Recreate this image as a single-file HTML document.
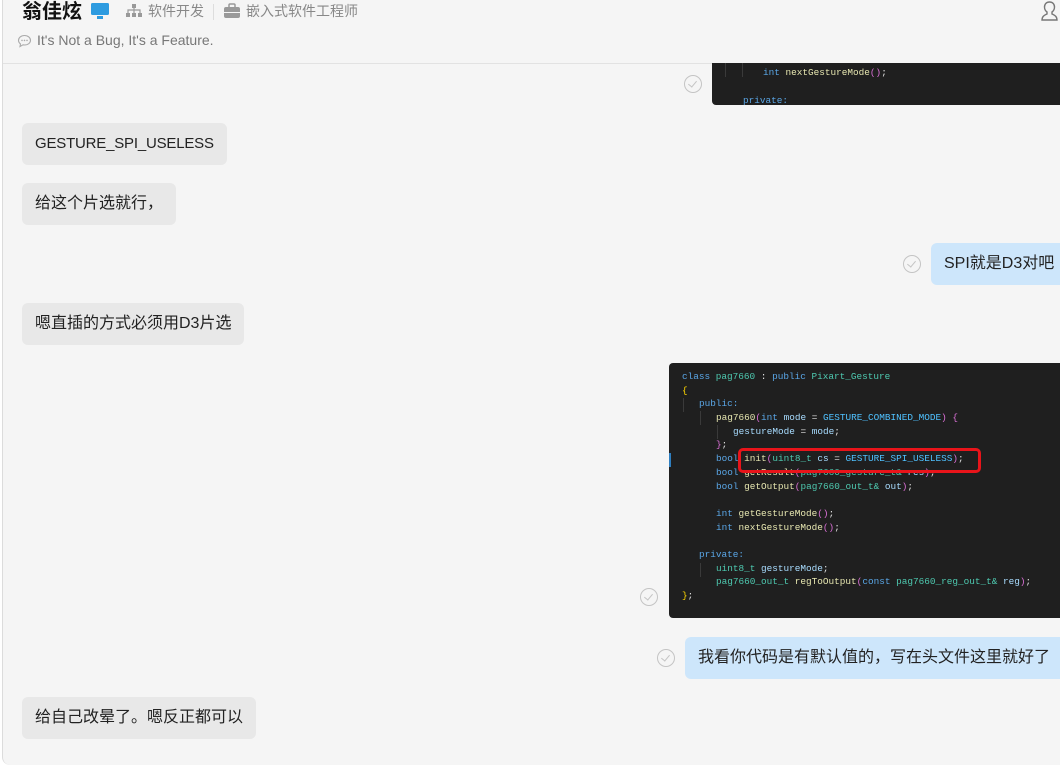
<!DOCTYPE html>
<html><head><meta charset="utf-8"><style>
html,body{margin:0;padding:0;background:#fff;}
body{width:1060px;height:767px;position:relative;overflow:hidden;font-family:"Liberation Sans","Noto Sans CJK SC",sans-serif;}
.win{position:absolute;left:2px;top:-10px;width:1070px;height:775px;background:#f5f5f5;border-left:1px solid #dcdcdc;border-radius:8px;overflow:hidden;}
.hdrline{position:absolute;left:3px;top:63px;width:1060px;height:1px;background:#e2e2e2;}
.abs{position:absolute;white-space:nowrap;}
.b{position:absolute;height:42px;line-height:42px;font-size:16px;color:#222;padding:0 13px;border-radius:6px;white-space:nowrap;}
.l{background:#e8e8e8;}
.r{background:#cde6fb;}
.chk{position:absolute;width:16px;height:16px;border:1.5px solid #c4c4c4;border-radius:50%;}
.chk:after{content:"";position:absolute;left:5px;top:3px;width:4px;height:7px;border:solid #c4c4c4;border-width:0 1.5px 1.5px 0;transform:rotate(40deg);}
.code{position:absolute;background:#1f1f1f;border-radius:4px;font-family:"Liberation Mono",monospace;font-size:9.4px;color:#e0e0e0;overflow:hidden;}
.code div{height:13.7px;line-height:13.7px;white-space:pre;}
.k{color:#5aa6e6}.t{color:#4ec9b0}.f{color:#e6e6b0}.p{color:#da70d6}.y{color:#ffd700}.m{color:#4fc1ff}.v{color:#a8dcff}
.g{position:absolute;top:0;bottom:0;width:1px;background:#3a3a3a;}
</style></head><body>
<div class="win"></div>
<div class="hdrline"></div>
<div class="abs" style="left:22px;top:0px;font-size:20px;font-weight:bold;color:#111;line-height:24px;">翁佳炫</div>
<svg class="abs" style="left:90px;top:2px" width="20" height="18" viewBox="0 0 20 18"><rect x="1" y="1" width="18" height="12" rx="1.5" fill="#2d9be0"/><rect x="7" y="14" width="6" height="3" fill="#2d9be0"/></svg>
<svg class="abs" style="left:125px;top:3px" width="18" height="16" viewBox="0 0 18 16" fill="#999"><rect x="7" y="1" width="4" height="4"/><rect x="1" y="10" width="4" height="4"/><rect x="7" y="10" width="4" height="4"/><rect x="13" y="10" width="4" height="4"/><path d="M3 10V7h12v3M9 5v5" stroke="#999" fill="none" stroke-width="1.2"/></svg>
<div class="abs" style="left:148px;top:3px;font-size:14px;color:#888;line-height:17px;">软件开发</div>
<div class="abs" style="left:213px;top:4px;width:1px;height:16px;background:#ddd;"></div>
<svg class="abs" style="left:223px;top:3px" width="18" height="16" viewBox="0 0 18 16"><rect x="1" y="4" width="16" height="11" rx="2" fill="#999"/><rect x="6" y="1" width="6" height="4" rx="1" fill="none" stroke="#999" stroke-width="1.5"/><rect x="1" y="9" width="16" height="1" fill="#f5f5f5"/></svg>
<div class="abs" style="left:246px;top:3px;font-size:14px;color:#888;line-height:17px;">嵌入式软件工程师</div>
<svg class="abs" style="left:17px;top:34px" width="15" height="14" viewBox="0 0 15 14"><path d="M7.5 1.5C4 1.5 1.5 3.6 1.5 6.3c0 1.5.8 2.8 2 3.6L3 12.5l3-1.7c.5.1 1 .2 1.5.2 3.5 0 6-2.1 6-4.7S11 1.5 7.5 1.5z" fill="none" stroke="#aaa" stroke-width="1.1"/><circle cx="5" cy="6.4" r=".8" fill="#aaa"/><circle cx="7.5" cy="6.4" r=".8" fill="#aaa"/><circle cx="10" cy="6.4" r=".8" fill="#aaa"/></svg>
<div class="abs" style="left:37px;top:32px;font-size:14px;color:#777;line-height:17px;">It's Not a Bug, It's a Feature.</div>
<svg class="abs" style="left:1040px;top:0px" width="20" height="22" viewBox="0 0 20 22"><path d="M2 20c0-4 3-5 5-6v-2c-1.5-1-2.5-2.5-2.5-5C4.5 4 6.5 2 9.5 2s5 2 5 5c0 2.5-1 4-2.5 5v2c2 1 5 2 5 6z" fill="none" stroke="#777" stroke-width="1.4"/></svg>

<div class="code" style="left:712px;top:63px;width:360px;height:42px;border-radius:0 0 4px 4px;">
 <div class="g" style="left:13px"></div><div class="g" style="left:30px"></div>
 <div style="padding-left:51px;margin-top:3px"><span class="k">int</span> <span class="f">nextGestureMode</span><span class="p">()</span>;</div>
 <div></div>
 <div style="padding-left:31px;margin-top:1px" class="k">private:</div>
</div>
<div class="chk" style="left:684px;top:75px"></div>

<div class="b l" style="left:22px;top:123px;font-size:15px;letter-spacing:-0.2px">GESTURE_SPI_USELESS</div>
<div class="b l" style="left:22px;top:183px">给这个片选就行，</div>
<div class="chk" style="left:903px;top:255px"></div>
<div class="b r" style="left:931px;top:243px;padding-right:20px">SPI就是D3对吧</div>
<div class="b l" style="left:22px;top:303px">嗯直插的方式必须用D3片选</div>

<div class="code" style="left:669px;top:363px;width:400px;height:255px;padding-top:7px;box-sizing:border-box;">
 <div class="g" style="left:14px;top:35px;bottom:25px"></div>
 <div class="g" style="left:31px;top:48px;bottom:90px"></div>
 <div class="g" style="left:48px;top:62px;bottom:150px"></div>
 <div class="g" style="left:31px;top:200px;bottom:25px"></div>
 <div style="position:absolute;left:0;top:90px;width:2px;height:14px;background:#2f7fc0"></div>
 <div style="padding-left:13px"><span class="k">class</span> <span class="t">pag7660</span> : <span class="k">public</span> <span class="t">Pixart_Gesture</span></div>
 <div style="padding-left:13px"><span class="y">{</span></div>
 <div style="padding-left:30px" class="k">public:</div>
 <div style="padding-left:47px"><span class="f">pag7660</span><span class="p">(</span><span class="k">int</span> <span class="v">mode</span> = <span class="m">GESTURE_COMBINED_MODE</span><span class="p">)</span> <span class="p">{</span></div>
 <div style="padding-left:64px"><span class="v">gestureMode</span> = <span class="v">mode</span>;</div>
 <div style="padding-left:47px"><span class="p">}</span>;</div>
 <div style="padding-left:47px"><span class="k">bool</span> <span class="f">init</span><span class="p">(</span><span class="t">uint8_t</span> <span class="v">cs</span> = <span class="m">GESTURE_SPI_USELESS</span><span class="p">)</span>;</div>
 <div style="padding-left:47px"><span class="k">bool</span> <span class="f">getResult</span><span class="p">(</span><span class="t">pag7660_gesture_t&amp;</span> <span class="v">res</span><span class="p">)</span>;</div>
 <div style="padding-left:47px"><span class="k">bool</span> <span class="f">getOutput</span><span class="p">(</span><span class="t">pag7660_out_t&amp;</span> <span class="v">out</span><span class="p">)</span>;</div>
 <div></div>
 <div style="padding-left:47px"><span class="k">int</span> <span class="f">getGestureMode</span><span class="p">()</span>;</div>
 <div style="padding-left:47px"><span class="k">int</span> <span class="f">nextGestureMode</span><span class="p">()</span>;</div>
 <div></div>
 <div style="padding-left:30px" class="k">private:</div>
 <div style="padding-left:47px"><span class="t">uint8_t</span> <span class="v">gestureMode</span>;</div>
 <div style="padding-left:47px"><span class="t">pag7660_out_t</span> <span class="f">regToOutput</span><span class="p">(</span><span class="k">const</span> <span class="t">pag7660_reg_out_t&amp;</span> <span class="v">reg</span><span class="p">)</span>;</div>
 <div style="padding-left:13px"><span class="y">}</span>;</div>
 <div style="position:absolute;left:69px;top:85px;width:237px;height:19px;border:3px solid #e8141a;border-radius:5px;"></div>
</div>
<div class="chk" style="left:640px;top:588px"></div>

<div class="chk" style="left:657px;top:649px"></div>
<div class="b r" style="left:685px;top:637px;padding-right:20px">我看你代码是有默认值的，写在头文件这里就好了</div>

<div class="b l" style="left:22px;top:697px">给自己改晕了。嗯反正都可以</div>
</body></html>
